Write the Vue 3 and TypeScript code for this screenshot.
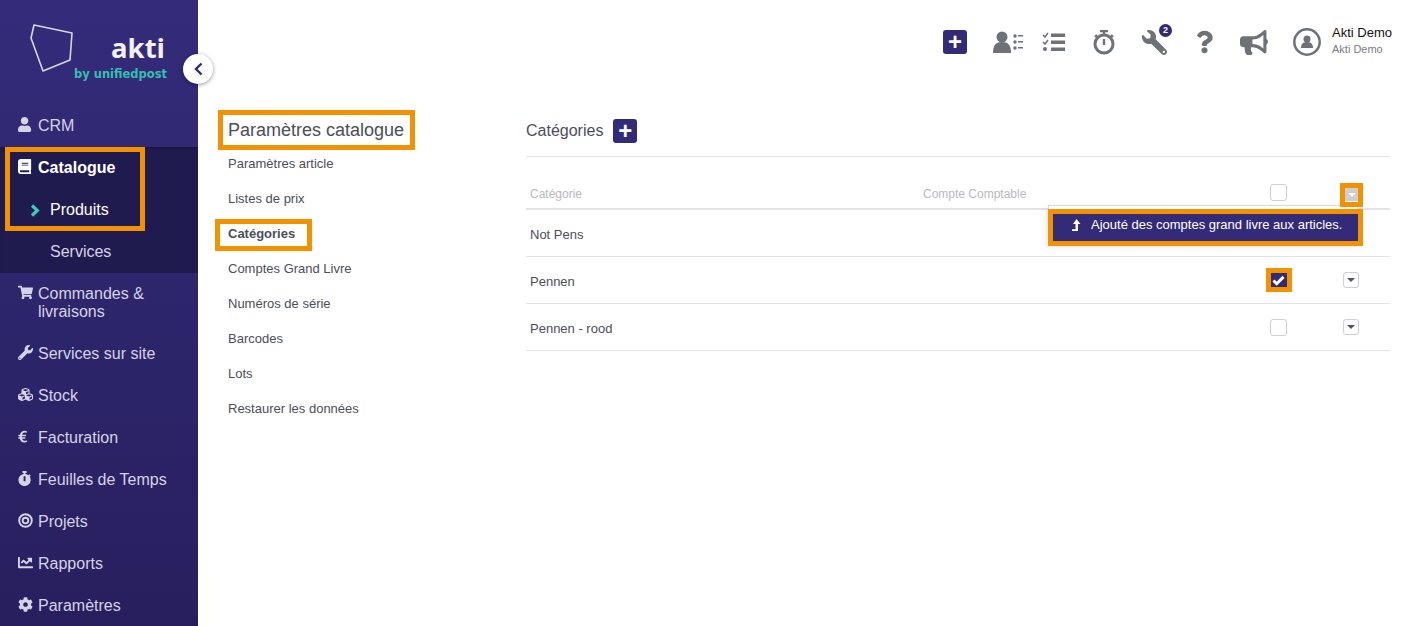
<script setup lang="ts">
const icons: Record<string, { box: string; d: string }> = {
  user: { box: '0 0 448 512', d: 'M224 256c70.7 0 128-57.3 128-128S294.7 0 224 0 96 57.3 96 128s57.3 128 128 128zm89.6 32h-16.7c-22.2 10.2-46.9 16-72.9 16s-50.6-5.8-72.9-16h-16.7C60.2 288 0 348.2 0 422.4V464c0 26.5 21.5 48 48 48h352c26.5 0 48-21.5 48-48v-41.6c0-74.2-60.2-134.4-134.4-134.4z' },
  book: { box: '0 0 448 512', d: 'M448 360V24c0-13.3-10.7-24-24-24H96C43 0 0 43 0 96v320c0 53 43 96 96 96h328c13.3 0 24-10.7 24-24v-16c0-7.5-3.5-14.3-8.9-18.7-4.2-15.4-4.2-59.3 0-74.7 5.4-4.3 8.9-11.1 8.9-18.6zM128 134c0-3.3 2.7-6 6-6h212c3.3 0 6 2.7 6 6v20c0 3.3-2.7 6-6 6H134c-3.3 0-6-2.7-6-6v-20zm0 64c0-3.3 2.7-6 6-6h212c3.3 0 6 2.7 6 6v20c0 3.3-2.7 6-6 6H134c-3.3 0-6-2.7-6-6v-20zm253.4 250H96c-17.7 0-32-14.3-32-32 0-17.6 14.4-32 32-32h285.4c-1.9 17.1-1.9 46.9 0 64z' },
  cart: { box: '0 0 576 512', d: 'M528.12 301.319l47.273-208C578.806 78.301 567.391 64 551.99 64H159.208l-9.166-44.81C147.758 8.021 137.93 0 126.529 0H24C10.745 0 0 10.745 0 24v16c0 13.255 10.745 24 24 24h69.883l70.248 343.435C147.325 417.1 136 435.222 136 456c0 30.928 25.072 56 56 56s56-25.072 56-56c0-15.674-6.447-29.835-16.824-40h209.647C430.447 426.165 424 440.326 424 456c0 30.928 25.072 56 56 56s56-25.072 56-56c0-22.172-12.888-41.332-31.579-50.405l5.517-24.276c3.413-15.018-8.002-29.319-23.403-29.319H218.117l-6.545-32h293.145c11.206 0 20.92-7.754 23.403-18.681z' },
  wrench: { box: '0 0 512 512', d: 'M507.73 109.1c-2.24-9.03-13.54-12.09-20.12-5.51l-74.36 74.36-67.88-11.31-11.31-67.88 74.36-74.36c6.62-6.62 3.43-17.9-5.66-20.16-47.38-11.74-99.55.91-136.58 37.93-39.64 39.64-50.55 97.1-34.05 147.2L18.74 402.76c-24.99 24.99-24.99 65.51 0 90.5 24.99 24.99 65.51 24.99 90.5 0l213.21-213.21c50.12 16.71 107.47 5.68 147.37-34.22 37.07-37.07 49.7-89.32 37.91-136.73zM64 472c-13.25 0-24-10.75-24-24 0-13.26 10.75-24 24-24s24 10.74 24 24c0 13.25-10.75 24-24 24z' },
  cubes: { box: '0 0 512 512', d: 'M488.6 250.2L392 214V105.5c0-15-9.3-28.4-23.4-33.7l-100-37.5c-8.1-3.1-17.1-3.1-25.3 0l-100 37.5c-14.1 5.3-23.4 18.7-23.4 33.7V214l-96.6 36.2C9.3 255.5 0 268.9 0 283.9V394c0 13.6 7.7 26.1 19.9 32.2l100 50c10.1 5.1 22.1 5.1 32.2 0l103.9-52 103.9 52c10.1 5.1 22.1 5.1 32.2 0l100-50c12.2-6.1 19.9-18.6 19.9-32.2V283.9c0-15-9.3-28.4-23.4-33.7zM358 214.8l-85 31.9v-68.2l85-37v73.3zM154 104.1l102-38.2 102 38.2v.6l-102 41.4-102-41.4v-.6zm84 291.1l-85 42.5v-79.1l85-38.8v75.4zm0-112l-102 41.4-102-41.4v-.6l102-38.2 102 38.2v.6zm240 112l-85 42.5v-79.1l85-38.8v75.4zm0-112l-102 41.4-102-41.4v-.6l102-38.2 102 38.2v.6z' },
  euro: { box: '0 0 320 512', d: 'M310 432c-20 14-55 28-92 28-84 0-140-52-158-130H8l10-46h34c-1-12-1-28 0-40H8l10-46h44C82 118 140 56 222 56c32 0 62 8 84 18l-16 62c-18-10-40-16-64-16-40 0-70 30-84 78h136l-10 46H132c-1 12-1 28 0 40h122l-10 46H144c12 46 42 70 84 70 26 0 52-10 68-20z' },
  watch: { box: '0 0 448 512', d: 'M432 304c0 114.9-93.1 208-208 208S16 418.9 16 304c0-104 76.3-190.2 176-205.5V64h-28c-6.6 0-12-5.4-12-12V12c0-6.6 5.4-12 12-12h120c6.6 0 12 5.4 12 12v40c0 6.6-5.4 12-12 12h-28v34.5c37.5 5.8 71.7 21.6 99.7 44.6l27.5-27.5c4.7-4.7 12.3-4.7 17 0l28.3 28.3c4.7 4.7 4.7 12.3 0 17l-29.4 29.4-.6.6C419.7 223.3 432 262.2 432 304zm-176 36V188.5c0-6.6-5.4-12-12-12h-40c-6.6 0-12 5.4-12 12V340c0 6.6 5.4 12 12 12h40c6.6 0 12-5.4 12-12z' },
  target: { box: '0 0 512 512', d: 'M256 8a248 248 0 1 0 0 496 248 248 0 0 0 0-496zm0 430a182 182 0 1 1 0-364 182 182 0 0 1 0 364zm0-310a128 128 0 1 0 0 256 128 128 0 0 0 0-256zm0 192a64 64 0 1 1 0-128 64 64 0 0 1 0 128z' },
  chart: { box: '0 0 512 512', d: 'M496 384H64V80c0-8.84-7.16-16-16-16H16C7.16 64 0 71.16 0 80v336c0 17.67 14.33 32 32 32h464c8.84 0 16-7.16 16-16v-32c0-8.84-7.16-16-16-16zM464 96H345.94c-21.38 0-32.09 25.85-16.97 40.97l32.4 32.4L288 242.75l-73.37-73.37c-12.5-12.5-32.76-12.5-45.25 0l-68.69 68.69c-6.25 6.25-6.25 16.38 0 22.63l22.62 22.62c6.25 6.25 16.38 6.25 22.63 0L192 237.25l73.37 73.37c12.5 12.5 32.76 12.5 45.25 0l96-96 32.4 32.4c15.12 15.12 40.97 4.41 40.97-16.97V112c.01-8.84-7.15-16-15.99-16z' },
  cog: { box: '0 0 512 512', d: 'M487.4 315.7l-42.6-24.6c4.3-23.2 4.3-47 0-70.2l42.6-24.6c4.9-2.8 7.1-8.6 5.5-14-11.1-35.6-30-67.8-54.7-94.6-3.8-4.1-10-5.1-14.8-2.3L380.8 110c-17.9-15.4-38.5-27.3-60.8-35.1V25.8c0-5.6-3.9-10.5-9.4-11.7-36.7-8.2-74.3-7.8-109.2 0-5.5 1.2-9.4 6.1-9.4 11.7V75c-22.2 7.9-42.8 19.8-60.8 35.1L88.7 85.5c-4.9-2.8-11-1.9-14.8 2.3-24.7 26.7-43.6 58.9-54.7 94.6-1.7 5.4.6 11.2 5.5 14L67.3 221c-4.3 23.2-4.3 47 0 70.2l-42.6 24.6c-4.9 2.8-7.1 8.6-5.5 14 11.1 35.6 30 67.8 54.7 94.6 3.8 4.1 10 5.1 14.8 2.3l42.6-24.6c17.9 15.4 38.5 27.3 60.8 35.1v49.2c0 5.6 3.9 10.5 9.4 11.7 36.7 8.2 74.3 7.8 109.2 0 5.5-1.2 9.4-6.1 9.4-11.7v-49.2c22.2-7.9 42.8-19.8 60.8-35.1l42.6 24.6c4.9 2.8 11 1.9 14.8-2.3 24.7-26.7 43.6-58.9 54.7-94.6 1.5-5.5-.7-11.3-5.6-14.1zM256 336c-44.1 0-80-35.9-80-80s35.9-80 80-80 80 35.9 80 80-35.9 80-80 80z' },
}
const topIcons = {
  wrench: icons.wrench.d,
  question: 'M202.021 0C122.202 0 70.503 32.703 29.914 91.026c-7.363 10.58-5.093 25.086 5.178 32.874l43.138 32.709c10.373 7.865 25.132 6.026 33.253-4.148 25.049-31.381 43.63-49.449 82.757-49.449 30.764 0 68.816 19.799 68.816 49.631 0 22.552-18.617 34.134-48.993 51.164-35.423 19.86-82.299 44.576-82.299 106.405V320c0 13.255 10.745 24 24 24h72.471c13.255 0 24-10.745 24-24v-5.773c0-42.86 125.268-44.645 125.268-160.627C377.504 66.256 286.902 0 202.021 0zM192 373.459c-38.196 0-69.271 31.075-69.271 69.271 0 38.195 31.075 69.27 69.271 69.27s69.271-31.075 69.271-69.271-31.075-69.27-69.271-69.27z',
  bullhorn: 'M576 240c0-23.63-12.95-44.04-32-55.12V32.01C544 23.26 537.02 0 512 0c-7.12 0-14.19 2.38-19.98 7.02l-85.03 68.03C364.28 109.19 310.66 128 256 128H64c-35.35 0-64 28.65-64 64v96c0 35.35 28.65 64 64 64h33.7c-1.39 10.48-2.18 21.14-2.18 32 0 39.77 9.26 77.35 25.56 110.94 5.19 10.69 16.52 17.06 28.4 17.06h74.28c26.05 0 41.69-29.84 25.9-50.56-16.4-21.52-26.15-48.36-26.15-77.44 0-11.11 1.62-21.79 4.41-32H256c54.66 0 108.28 18.81 150.98 52.95l85.03 68.03a32.023 32.023 0 0 0 19.98 7.02c24.92 0 32-22.78 32-32V295.13C563.05 284.04 576 263.63 576 240zm-96 141.42l-33.05-26.44C392.95 311.78 325.12 288 256 288v-96c69.12 0 136.95-23.78 190.95-66.98L480 98.58v282.84z',
}
const navBefore = [{ label: 'CRM', icon: 'user' }]
const navAfter = [
  { label: 'Commandes & livraisons', icon: 'cart' },
  { label: 'Services sur site', icon: 'wrench' },
  { label: 'Stock', icon: 'cubes' },
  { label: 'Facturation', icon: 'euro' },
  { label: 'Feuilles de Temps', icon: 'watch' },
  { label: 'Projets', icon: 'target' },
  { label: 'Rapports', icon: 'chart' },
  { label: 'Paramètres', icon: 'cog' },
]
const settings = ['Paramètres article', 'Listes de prix', 'Catégories', 'Comptes Grand Livre', 'Numéros de série', 'Barcodes', 'Lots', 'Restaurer les données']
const rows = [
  { name: 'Not Pens', checked: false, hideControls: true },
  { name: 'Pennen', checked: true, hideControls: false },
  { name: 'Pennen - rood', checked: false, hideControls: false },
]
</script>

<template>
  <div class="page">
    <aside class="sidebar">
      <div class="logo">
        <svg class="mark" width="46" height="52" viewBox="0 0 46 52"><path d="M5 1 43 9 41 36 14 47 2 14Z" fill="none" stroke="#d9d6e8" stroke-width="1.6" stroke-linejoin="round" /></svg>
        <span class="akti">akti</span>
        <span class="by">by unifiedpost</span>
      </div>
      <nav>
        <a v-for="n in navBefore" :key="n.label" class="nav-item">
          <svg class="nav-icon" :viewBox="icons[n.icon].box" preserveAspectRatio="xMinYMid"><path :d="icons[n.icon].d" /></svg>
          <span>{{ n.label }}</span>
        </a>
        <div class="group">
          <a class="nav-item active">
            <svg class="nav-icon" :viewBox="icons.book.box" preserveAspectRatio="xMinYMid"><path :d="icons.book.d" /></svg>
            <span>Catalogue</span>
          </a>
          <a class="sub current">
            <svg class="chev" width="10" height="13" viewBox="0 0 10 13"><path d="M2 1.500 7.300 6.500 2 11.500" fill="none" stroke="#39cdb6" stroke-width="3.200" /></svg>
            Produits
          </a>
          <a class="sub">Services</a>
        </div>
        <a v-for="n in navAfter" :key="n.label" class="nav-item">
          <svg class="nav-icon" :viewBox="icons[n.icon].box" preserveAspectRatio="xMinYMid"><path :d="icons[n.icon].d" /></svg>
          <span>{{ n.label }}</span>
        </a>
      </nav>
    </aside>

    <main class="content">
      <header class="topbar">
        <div class="slot first"><span class="plus">+</span></div>
        <div class="slot shift">
          <svg width="30" height="22" viewBox="0 0 30 22" fill="#6d7278"><circle cx="9" cy="6" r="5.500" /><path d="M0 22c0-8 3-11 9-11s9 3 9 11z" /><circle cx="22" cy="5" r="1.700" /><circle cx="22" cy="11" r="1.700" /><circle cx="22" cy="17" r="1.700" /><path d="M25 4h5v1.500h-5zM25 10h5v1.500h-5zM25 16h5v1.500h-5z" /></svg>
        </div>
        <div class="slot">
          <svg width="24" height="20" viewBox="0 0 24 20" fill="#6d7278"><path d="M1 3l2 2 3-4M1 10l2 2 3-4" fill="none" stroke="#6d7278" stroke-width="1.500" /><circle cx="3" cy="17" r="2" /><path d="M9 1.500h14v3.500H9zM9 8.500h14V12H9zM9 15.500h14V19H9z" /></svg>
        </div>
        <div class="slot">
          <svg width="22" height="25" viewBox="0 0 22 25"><circle cx="11" cy="14" r="9" fill="none" stroke="#6d7278" stroke-width="3" /><path d="M7 1h8M11 1v4M18 5l2 2M4 5 2 7M11 9v6" fill="none" stroke="#6d7278" stroke-width="2.400" /></svg>
        </div>
        <div class="slot wrench">
          <svg width="25" height="25" viewBox="0 0 512 512" fill="#6d7278" transform="scale(-1,1)"><path :d="topIcons.wrench" /></svg>
          <span class="badge">2</span>
        </div>
        <div class="slot"><svg width="17" height="24" viewBox="0 0 384 512" fill="#6d7278"><path :d="topIcons.question" /></svg></div>
        <div class="slot"><svg width="28" height="25" viewBox="0 0 576 512" fill="#6d7278"><path :d="topIcons.bullhorn" /></svg></div>
        <div class="profile">
          <svg width="28" height="28" viewBox="0 0 28 28"><circle cx="14" cy="14" r="12.700" fill="none" stroke="#6d7278" stroke-width="2.500" /><circle cx="14" cy="11" r="3.500" fill="#6d7278" /><path d="M8 20c0-4 2-6 6-6s6 2 6 6z" fill="#6d7278" /></svg>
          <div class="who">
            <div class="name">Akti Demo</div>
            <div class="org">Akti Demo</div>
          </div>
        </div>
      </header>

      <div class="body">
        <section class="settings">
          <h2>Paramètres catalogue</h2>
          <a v-for="s in settings" :key="s" :class="{ on: s === 'Catégories' }">{{ s }}</a>
        </section>
        <section class="panel">
          <div class="panel-head">
            <h3>Catégories</h3>
            <span class="plus">+</span>
          </div>
          <div class="row thead">
            <span>Catégorie</span>
            <span>Compte Comptable</span>
            <span class="box-cell"><i class="box"></i></span>
            <span class="btn-cell"><i class="drop hot"><b></b></i></span>
          </div>
          <div v-for="r in rows" :key="r.name" class="row">
            <span class="cell-name">{{ r.name }}</span>
            <span></span>
            <span class="box-cell">
              <i v-if="r.checked" class="box checked">
                <svg width="13" height="11" viewBox="0 0 13 11"><path d="M1.500 5.500l3.200 3.200 6.800-6.800" fill="none" stroke="#fff" stroke-width="3" /></svg>
              </i>
              <i v-else-if="!r.hideControls" class="box"></i>
            </span>
            <span class="btn-cell"><i v-if="!r.hideControls" class="drop"><b></b></i></span>
          </div>
          <div class="menu">
            <div class="menu-item">
              <svg width="10" height="12" viewBox="0 0 10 12" fill="#fff"><path d="M5.500 0 9.500 5H7v7H1v-1.800h3.500V5H2z" /></svg>
              <span>Ajouté des comptes grand livre aux articles.</span>
            </div>
          </div>
        </section>
      </div>
    </main>

    <button class="collapse" aria-label="Réduire">
      <svg width="9" height="14" viewBox="0 0 9 14"><path d="M7.500 1.500 2 7l5.500 5.500" fill="none" stroke="#2f2a78" stroke-width="2.400" /></svg>
    </button>

    <i class="mark-box m1"></i>
    <i class="mark-box m2"></i>
    <i class="mark-box m3"></i>
    <i class="mark-box m4"></i>
    <i class="mark-box m5"></i>
    <i class="mark-box m6"></i>
  </div>
</template>

<style>
html, body { margin: 0; background: #fff; }
</style>

<style scoped>
.page {
  position: relative;
  display: flex;
  width: 1403px;
  height: 626px;
  overflow: hidden;
  font-family: "Liberation Sans", Arial, sans-serif;
  background: #fff;
}
.sidebar {
  width: 198px;
  flex: none;
  background: linear-gradient(180deg, #342c7a 0%, #271f5d 100%);
  color: #d5d3e6;
  font-size: 16px;
}
.logo {
  position: relative;
  height: 105px;
}
.mark { position: absolute; left: 29px; top: 24px; }
.akti {
  position: absolute;
  left: 111px;
  top: 31px;
  color: #f2f1f8;
  font: 700 27.500px/34px "Open Sans", sans-serif;
}
.by {
  position: absolute;
  left: 74px;
  top: 66px;
  color: #34bfb2;
  font: 700 11.500px/16px "DejaVu Sans", sans-serif;
  white-space: nowrap;
}
.nav-item {
  display: flex;
  gap: 5px;
  padding: 12px 18px;
  line-height: 18px;
  min-height: 18px;
}
.nav-item span { flex: 1; }
.nav-icon {
  width: 15px;
  height: 15px;
  flex: none;
  fill: #d5d3e6;
}
.group { background: #201b4f; box-shadow: inset 0 3px 3px -2px #1a1640; }
.active { color: #fff; font-weight: 700; }
.active .nav-icon { fill: #fff; }
.sub {
  position: relative;
  display: block;
  height: 42px;
  padding-left: 50px;
  line-height: 42px;
}
.current { color: #fff; }
.chev { position: absolute; left: 30px; top: 15px; }
.content { flex: 1; min-width: 0; }
.topbar {
  display: flex;
  align-items: center;
  height: 84px;
  padding-left: 731px;
}
.slot {
  position: relative;
  width: 50px;
  flex: none;
  display: flex;
  justify-content: center;
  align-items: center;
}
.first .plus { margin-left: 2px; }
.shift svg { margin-left: 8px; }
.plus {
  display: inline-flex;
  align-items: center;
  justify-content: center;
  width: 24px;
  height: 24px;
  border-radius: 3px;
  background: #332a78;
  color: #fff;
  font-size: 24px;
  font-weight: 700;
  line-height: 24px;
}
.badge {
  position: absolute;
  left: 30px;
  top: -6px;
  width: 13px;
  height: 13px;
  border-radius: 50%;
  background: #2f2a78;
  color: #fff;
  font-size: 9px;
  font-weight: 700;
  line-height: 13px;
  text-align: center;
}
.profile {
  display: flex;
  align-items: center;
  gap: 11px;
  margin-left: 14px;
}
.who { margin-top: -2px; }
.name { color: #111; font-size: 13px; line-height: 16px; }
.org { color: #777d83; font-size: 11px; line-height: 16px; }
.body { display: flex; }
.settings {
  width: 298px;
  padding-left: 30px;
  flex: none;
  color: #4b4e5a;
  font-size: 13px;
}
.settings h2 {
  margin: 0;
  padding: 31px 0 0;
  height: 62px;
  color: #4b4e5a;
  font-size: 18px;
  font-weight: 400;
  line-height: 30px;
  box-sizing: border-box;
}
.settings a {
  display: block;
  height: 35px;
  line-height: 35px;
}
.settings .on { font-weight: 700; }
.panel {
  position: relative;
  width: 864px;
  color: #4b4e5a;
}
.panel-head {
  display: flex;
  align-items: center;
  gap: 10px;
  height: 73px;
  padding-top: 21px;
  box-sizing: border-box;
  border-bottom: 1px solid #e2e2e8;
}
.panel-head h3 { margin: 0; font-size: 16px; font-weight: 400; }
.row {
  display: grid;
  grid-template-columns: 393px 337px 37px 1fr;
  align-items: center;
  height: 47px;
  padding-left: 4px;
  border-bottom: 1px solid #e2e2e8;
  box-sizing: border-box;
  font-size: 13px;
}
.cell-name { padding-top: 2px; }
.thead {
  height: 53px;
  padding-top: 22px;
  border-bottom-width: 2px;
  color: #b9b9bf;
  font-size: 12px;
}
.box-cell { display: flex; justify-content: center; }
.btn-cell { display: flex; }
.box-cell i, .btn-cell i { font-style: normal; }
.box {
  display: flex;
  align-items: center;
  justify-content: center;
  width: 17px;
  height: 17px;
  border: 1px solid #cfcfd4;
  border-radius: 3px;
  box-sizing: border-box;
  background: #fff;
}
.thead .box { margin-bottom: 3px; }
.checked {
  width: 16px;
  height: 14px;
  border: 0;
  border-radius: 0;
  background: #332a78;
}
.drop {
  display: flex;
  align-items: center;
  justify-content: center;
  width: 16px;
  height: 16px;
  margin-left: 46px;
  border: 1px solid #cfcfd4;
  border-radius: 3px;
  box-sizing: border-box;
  background: #fff;
}
.drop b {
  flex: none;
  width: 0;
  height: 0;
  border: 4px solid transparent;
  border-top: 4px solid #55555c;
  border-bottom: 0;
}
.hot { background: #ccd0d4; width: 13px; height: 13px; margin: 2px 0 0 48px; border: 0; border-radius: 0; }
.hot b { border-top-color: #fff; }
.menu {
  position: absolute;
  left: 522px;
  top: 121px;
  width: 310px;
  height: 36px;
  border: 1px solid #d8d8d8;
  box-sizing: border-box;
  background: #fff;
  box-shadow: 0 4px 8px rgba(0, 0, 0, .15);
}
.menu-item {
  position: absolute;
  left: 4px;
  right: -1px;
  top: 8px;
  height: 27px;
  display: flex;
  align-items: center;
  gap: 10px;
  padding: 0 0 6px 18px;
  background: #332a78;
  color: #fff;
  font-size: 13px;
  box-sizing: border-box;
  white-space: nowrap;
}
.collapse {
  position: absolute;
  left: 183px;
  top: 54px;
  width: 30px;
  height: 30px;
  padding: 0;
  border: 0;
  border-radius: 50%;
  background: #fff;
  box-shadow: 0 1px 4px rgba(0, 0, 0, .4);
  display: flex;
  align-items: center;
  justify-content: center;
}
.mark-box {
  position: absolute;
  border: 5px solid #f39200;
  box-sizing: border-box;
  pointer-events: none;
}
.m1 { left: 5px; top: 147px; width: 140px; height: 84px; }
.m2 { left: 218px; top: 110px; width: 197px; height: 40px; }
.m3 { left: 215px; top: 219px; width: 97px; height: 32px; }
.m4 { left: 1340px; top: 183px; width: 23px; height: 24px; }
.m5 { left: 1048px; top: 209px; width: 315px; height: 37px; }
.m6 { left: 1266px; top: 268px; width: 26px; height: 24px; }
</style>
